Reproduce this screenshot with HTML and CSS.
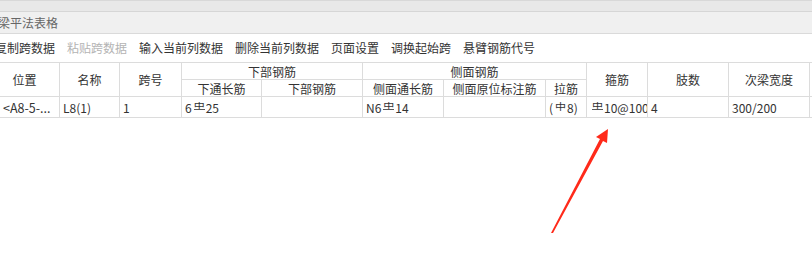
FILE: index.html
```
<!DOCTYPE html>
<html lang="zh-CN">
<head>
  <meta charset="UTF-8" />
  <title>梁平法表格</title>
  <link rel="stylesheet" href="styles.css">
</head>
<body>

  <div class="top-strip"></div>
  <div class="title-bar">梁平法表格</div>

  <div class="toolbar">
    <span class="tool">复制跨数据</span>
    <span class="tool disabled">粘贴跨数据</span>
    <span class="tool">输入当前列数据</span>
    <span class="tool">删除当前列数据</span>
    <span class="tool">页面设置</span>
    <span class="tool">调换起始跨</span>
    <span class="tool">悬臂钢筋代号</span>
  </div>

  <table class="grid">
    <colgroup>
      <col style="width:70px">
      <col style="width:60px">
      <col style="width:62px">
      <col style="width:80px">
      <col style="width:101px">
      <col style="width:81px">
      <col style="width:102px">
      <col style="width:41px">
      <col style="width:61px">
      <col style="width:81px">
      <col style="width:81px">
      <col style="width:81px">
    </colgroup>
    <tr class="head">
      <th rowspan="2">位置</th>
      <th rowspan="2">名称</th>
      <th rowspan="2">跨号</th>
      <th colspan="2">下部钢筋</th>
      <th colspan="3">侧面钢筋</th>
      <th rowspan="2">箍筋</th>
      <th rowspan="2">肢数</th>
      <th rowspan="2">次梁宽度</th>
      <th rowspan="2"></th>
    </tr>
    <tr class="head">
      <th>下通长筋</th>
      <th>下部钢筋</th>
      <th>侧面通长筋</th>
      <th>侧面原位标注筋</th>
      <th>拉筋</th>
    </tr>
    <tr class="data">
      <td class="pos">&lt;A8-5-...</td>
      <td>L8(1)</td>
      <td>1</td>
      <td>6<span class="bar hrb">中</span>25</td>
      <td></td>
      <td>N6<span class="bar hrb">中</span>14</td>
      <td></td>
      <td>(<span class="bar">中</span>8)</td>
      <td class="cut"><span class="bar hrb">中</span>10@100</td>
      <td>4</td>
      <td>300/200</td>
      <td></td>
    </tr>
  </table>

  <svg class="arrow" width="812" height="269" viewBox="0 0 812 269">
    <polygon points="551,233 600,139 596,137 608,129 607,143 603,141 553,233" fill="#ff2a1a" />
  </svg>

</body>
</html>
```

FILE: styles.css
```
body {
  margin: 0;
  background: #fff;
  font-family: "Noto Sans CJK SC", "Microsoft YaHei", sans-serif;
  font-size: 12px;
  color: #333;
  overflow: hidden;
  width: 812px;
  height: 269px;
  position: relative;
}

.top-strip {
  height: 10px;
  background: #e8e8e8;
  border-top: 1px solid #d8d8d8;
  border-bottom: 1px solid #d6d6d6;
}

.title-bar {
  height: 21px;
  line-height: 21px;
  background: #f0f0f0;
  border-bottom: 1px solid #dadada;
  color: #666;
  font-size: 12px;
  margin-left: -2px;
}

.toolbar {
  height: 28px;
  line-height: 27px;
  display: flex;
  gap: 12px;
  margin-left: -5px;
  white-space: nowrap;
  color: #333;
}

.tool.disabled {
  color: #b4b4b4;
}

.grid {
  border-collapse: collapse;
  table-layout: fixed;
  width: 901px;
  margin-left: -11px;
}

.grid th, .grid td {
  border: 1px solid #dcdcdc;
  padding: 0 3px;
  overflow: hidden;
  white-space: nowrap;
  font-size: 12px;
  color: #333;
}

.grid th {
  font-weight: normal;
  height: 16px;
  line-height: 15px;
  text-align: center;
}

.grid td {
  height: 20px;
  line-height: 19px;
  text-align: left;
}

.grid td.pos {
  padding-left: 13px;
  padding-right: 0;
  font-size: 12.5px;
}

.grid td.cut {
  padding-right: 0;
  text-overflow: clip;
}

.bar {
  display: inline-block;
  font-size: 11px;
  line-height: 11px;
  vertical-align: 2px;
  transform: scaleY(0.8);
  margin: 0 1px 0 2px;
}

.bar.hrb {
  border-bottom: 1px solid #333;
  line-height: 9px;
  height: 9px;
  overflow: hidden;
}

.arrow {
  position: absolute;
  left: 0;
  top: 0;
  pointer-events: none;
}
```
